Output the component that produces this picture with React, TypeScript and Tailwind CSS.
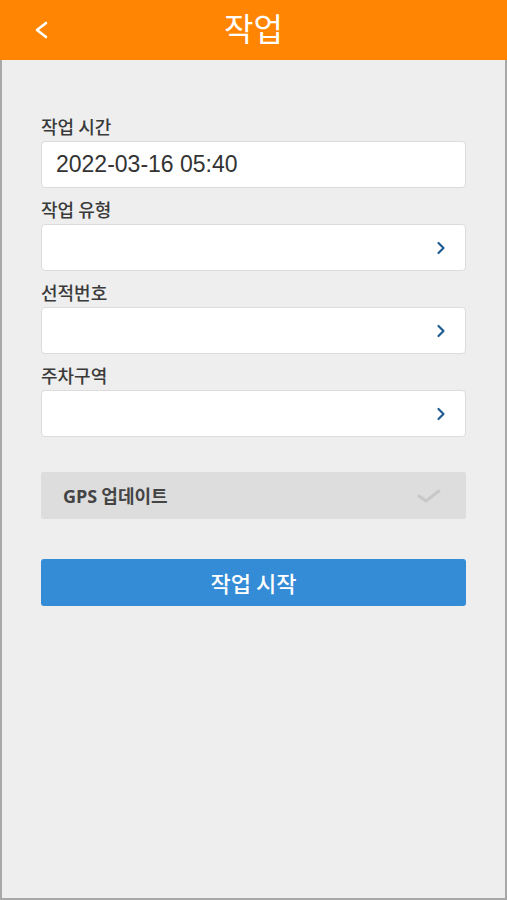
import { ChevronRight } from 'lucide-react';

const fields = ['작업 유형', '선적번호', '주차구역'];

export default function App() {
  return (
    <div className="w-[507px] h-[900px] flex flex-col bg-[#eeeeee] font-['Noto_Sans_CJK_KR',sans-serif]">
      {/* Header */}
      <header className="relative h-[60px] shrink-0 bg-[#ff8502] flex items-center justify-center">
        <svg
          className="absolute left-[33px] top-[20px]"
          width="16"
          height="20"
          viewBox="0 0 16 20"
          fill="none"
          stroke="white"
          strokeWidth="2.6"
          strokeLinecap="round"
          strokeLinejoin="round"
        >
          <path d="M13 3 L4 10 L13 17" />
        </svg>
        <h1 className="text-white text-[32px] font-normal leading-none -mt-[6px]">작업</h1>
      </header>

      {/* Body */}
      <main className="flex-1 border-x-2 border-b-2 border-[#a8a8a8] px-[39px] pt-[55px]">
        <label className="block text-[18px] text-[#3a3a3a] font-medium leading-[22px] mb-[4px]">작업 시간</label>
        <div className="h-[47px] bg-white border border-[#dcdcdc] rounded-[4px] flex items-center px-[14px]">
          <span className="font-['Liberation_Sans',sans-serif] text-[23px] text-[#333]">2022-03-16 05:40</span>
        </div>

        {fields.map((f) => (
          <div key={f} className="mt-[10px]">
            <label className="block text-[18px] text-[#3a3a3a] font-medium leading-[22px] mb-[4px]">{f}</label>
            <div className="h-[47px] bg-white border border-[#dcdcdc] rounded-[4px] flex items-center justify-end pr-[14px]">
              <ChevronRight size={20} strokeWidth={2.6} className="text-[#1f5c94]" />
            </div>
          </div>
        ))}

        <div className="mt-[35px] h-[47px] bg-[#dddddd] rounded-[2px] flex items-center justify-between px-[22px]">
          <span className="text-[18px] font-bold text-[#444]">
            <span className="font-['Open_Sans',sans-serif]">GPS</span> 업데이트
          </span>
          <svg width="26" height="16" viewBox="0 0 26 16" fill="none" stroke="#c8c8c8" strokeWidth="3" strokeLinecap="round" strokeLinejoin="round" className="mr-[2px]">
            <path d="M3 8 L10 13 L23 3" />
          </svg>
        </div>

        <button className="mt-[40px] w-full h-[47px] bg-[#348bd6] rounded-[3px] text-white text-[22px] font-medium">
          작업 시작
        </button>
      </main>
    </div>
  );
}
